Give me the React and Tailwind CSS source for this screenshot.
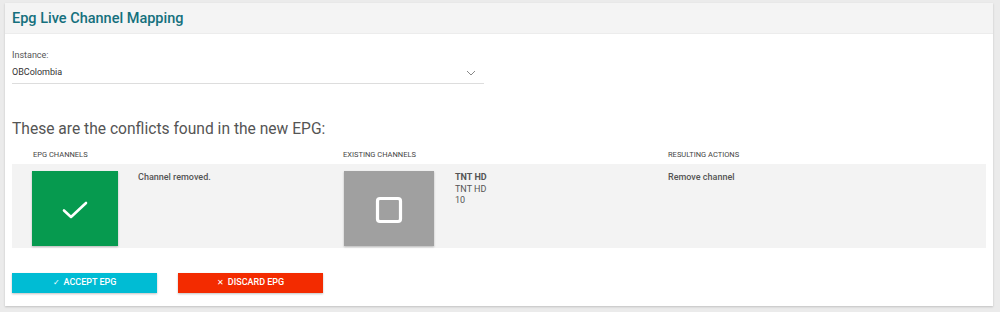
const font = { fontFamily: "Roboto, 'Liberation Sans', sans-serif" };

const CheckIcon = () => (
  <svg width="28" height="20" viewBox="0 0 28 20" fill="none">
    <path d="M3 10.5 L10 17 L25 3" stroke="white" strokeWidth="2.6" strokeLinecap="round" strokeLinejoin="round" />
  </svg>
);

const SquareIcon = () => (
  <svg width="28" height="28" viewBox="0 0 28 28" fill="none">
    <rect x="2.5" y="2.5" width="23" height="23" rx="2.5" stroke="white" strokeWidth="3.2" />
  </svg>
);

const App = () => {
  return (
    <div className="w-[1000px] h-[312px] bg-[#ebebeb] pt-[3px] pl-[5px]" style={font}>
      <div className="w-[988px] h-[303px] bg-white shadow-[0_1px_2px_rgba(0,0,0,0.18)] flex flex-col">
        {/* Header */}
        <div className="h-[31px] bg-[#f4f4f4] border-b border-[#ececec] flex items-center px-[7px] pt-[2px]">
          <h1 className="text-[14.5px] font-medium text-[#15707d] leading-none">Epg Live Channel Mapping</h1>
        </div>

        <div className="px-[7px] flex flex-col">
          {/* Instance select */}
          <div className="w-[472px] pt-[15px]">
            <p className="text-[9px] text-[#555] leading-[12px]">Instance:</p>
            <div className="flex items-center justify-between h-[20px] mt-[3px] border-b border-[#ddd] pb-[2px]">
              <span className="text-[9px] text-[#333]">OBColombia</span>
              <svg width="10" height="6" viewBox="0 0 10 6" className="mr-[8px]">
                <path d="M1 1 L5 5 L9 1" stroke="#888" strokeWidth="1" fill="none" />
              </svg>
            </div>
          </div>

          <h2 className="text-[15.6px] text-[#555] leading-[20px] mt-[35px]">These are the conflicts found in the new EPG:</h2>

          {/* Column headers */}
          <div className="flex mt-[9px] h-[13px] items-center text-[7.5px] text-[#444] uppercase">
            <div className="w-[331px] pl-[21px]">EPG Channels</div>
            <div className="w-[325px]">Existing Channels</div>
            <div className="flex-1">Resulting Actions</div>
          </div>

          {/* Conflict row */}
          <div className="flex bg-[#f3f3f3] h-[84px] mt-[3px] pt-[7px]">
            <div className="w-[332px] pl-[20px] flex">
              <div className="w-[86px] h-[75px] bg-[#069a4f] shadow-[0_1px_2px_rgba(0,0,0,0.25)] flex items-center justify-center pt-[3px]">
                <CheckIcon />
              </div>
              <p className="ml-[20px] text-[9px] font-medium text-[#555] leading-[12px]">Channel removed.</p>
            </div>
            <div className="w-[324px] flex">
              <div className="w-[90px] h-[75px] bg-[#a0a0a0] shadow-[0_1px_2px_rgba(0,0,0,0.25)] flex items-center justify-center pt-[2px]">
                <SquareIcon />
              </div>
              <div className="ml-[21px] mt-[1px] text-[9px] text-[#555] leading-[11.5px]">
                <p className="font-bold">TNT HD</p>
                <p>TNT HD</p>
                <p>10</p>
              </div>
            </div>
            <div className="flex-1">
              <p className="text-[9px] font-medium text-[#555] leading-[12px]">Remove channel</p>
            </div>
          </div>

          {/* Actions */}
          <div className="flex gap-[21px] mt-[25px]">
            <button className="w-[145px] h-[20px] bg-[#00bcd4] text-white text-[9px] font-medium uppercase shadow-[0_1px_2px_rgba(0,0,0,0.25)] flex items-center justify-center gap-[4px]">
              <span className="text-[8px]">✓</span>
              <span>Accept EPG</span>
            </button>
            <button className="w-[145px] h-[20px] bg-[#f32b00] text-white text-[9px] font-medium uppercase shadow-[0_1px_2px_rgba(0,0,0,0.25)] flex items-center justify-center gap-[4px]">
              <span className="text-[8px]">✕</span>
              <span>Discard EPG</span>
            </button>
          </div>
        </div>
      </div>
    </div>
  );
};

export default App;
